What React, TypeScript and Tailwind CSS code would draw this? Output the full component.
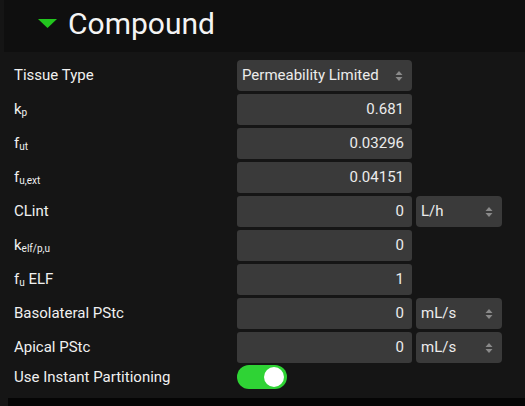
import { ReactNode } from 'react'

// 上下箭头（select 右侧）
function Chevrons() {
  return (
    <svg width="8" height="12" viewBox="0 0 8 12" className="flex-shrink-0">
      <path d="M4 1 L7.5 5 H0.5 Z" fill="#8a8a8a" />
      <path d="M4 11 L7.5 7 H0.5 Z" fill="#8a8a8a" />
    </svg>
  )
}

function NumberBox({ value }: { value: string }) {
  return (
    <div className="w-[175px] h-[31px] rounded-[3px] bg-[#3a3a3a] flex items-center justify-end pr-[8px] text-[15px] text-[#ececec]">
      {value}
    </div>
  )
}

function UnitSelect({ unit }: { unit: string }) {
  return (
    <div className="w-[86px] h-[31px] rounded-[4px] bg-[#3a3a3a] flex items-center justify-between pl-[5px] pr-[9px] text-[15px] text-[#ececec]">
      <span>{unit}</span>
      <Chevrons />
    </div>
  )
}

interface RowProps {
  label: ReactNode
  children: ReactNode
}

function Row({ label, children }: RowProps) {
  return (
    <div className="flex items-center h-[31px]">
      <div className="w-[223px] text-[15px] text-[#f0f0f0] leading-none">{label}</div>
      <div className="flex items-center gap-[4px]">{children}</div>
    </div>
  )
}

const Sub = ({ children }: { children: ReactNode }) => (
  <sub className="text-[10px] relative top-[2px]">{children}</sub>
)

export default function App() {
  return (
    <div
      className="w-[525px] h-[406px] bg-[#151515] flex flex-col overflow-hidden"
      style={{ fontFamily: 'Roboto, "Liberation Sans", sans-serif' }}
    >
      {/* 头部 */}
      <div className="ml-[4px] h-[52px] bg-[#0f0f0f] flex items-center pl-[34px] flex-shrink-0">
        <svg width="19" height="9" viewBox="0 0 19 9" className="mr-[11px] -mt-[6px]">
          <path d="M0 0 H19 L9.5 9 Z" fill="#22c51e" />
        </svg>
        <span className="text-[30px] text-[#f4f4f4] leading-none -mt-[4px]">Compound</span>
      </div>

      {/* 参数列表 */}
      <div className="flex flex-col gap-[3px] pl-[14px] pt-[8px] flex-1">
        <Row label="Tissue Type">
          <div className="w-[175px] h-[31px] rounded-[4px] bg-[#3a3a3a] flex items-center justify-between pl-[5px] pr-[9px] text-[15px] text-[#ececec]">
            <span>Permeability Limited</span>
            <Chevrons />
          </div>
        </Row>
        <Row label={<>k<Sub>p</Sub></>}>
          <NumberBox value="0.681" />
        </Row>
        <Row label={<>f<Sub>ut</Sub></>}>
          <NumberBox value="0.03296" />
        </Row>
        <Row label={<>f<Sub>u,ext</Sub></>}>
          <NumberBox value="0.04151" />
        </Row>
        <Row label="CLint">
          <NumberBox value="0" />
          <UnitSelect unit="L/h" />
        </Row>
        <Row label={<>k<Sub>elf/p,u</Sub></>}>
          <NumberBox value="0" />
        </Row>
        <Row label={<>f<Sub>u</Sub> ELF</>}>
          <NumberBox value="1" />
        </Row>
        <Row label="Basolateral PStc">
          <NumberBox value="0" />
          <UnitSelect unit="mL/s" />
        </Row>
        <Row label="Apical PStc">
          <NumberBox value="0" />
          <UnitSelect unit="mL/s" />
        </Row>
        <div className="flex items-center h-[24px] -mt-[1px]">
          <div className="w-[223px] text-[15px] text-[#f0f0f0] leading-none">Use Instant Partitioning</div>
          <button
            aria-label="Use Instant Partitioning"
            className="w-[50px] h-[24px] rounded-full bg-[#2fd335] flex items-center justify-end pr-[3px]"
          >
            <span className="w-[20px] h-[20px] rounded-full bg-white" />
          </button>
        </div>
      </div>

      {/* 底部黑条 */}
      <div className="ml-[8px] h-[8px] bg-[#050505] flex-shrink-0" />
    </div>
  )
}
